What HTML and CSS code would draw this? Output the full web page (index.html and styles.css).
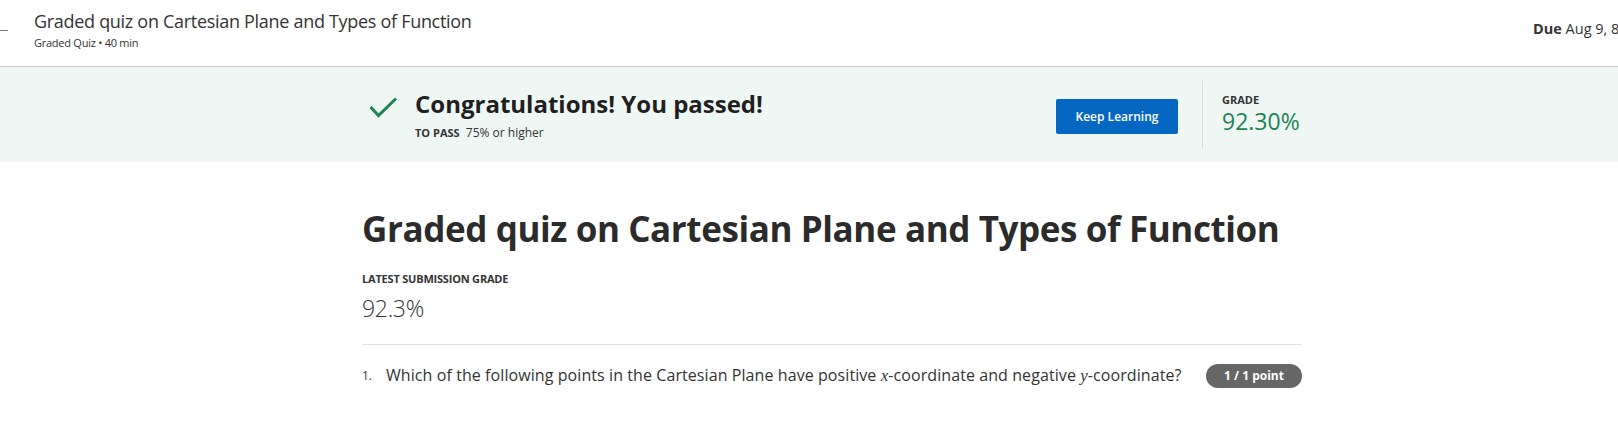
FILE: index.html
```html
<!DOCTYPE html>
<html lang="en">
<head>
<meta charset="utf-8">
<title>Graded quiz on Cartesian Plane and Types of Function</title>
<link rel="stylesheet" href="styles.css">
</head>
<body>
<header class="topbar">
  <div class="dash"></div>
  <div class="item-info">
    <div class="item-title">Graded quiz on Cartesian Plane and Types of Function</div>
    <div class="item-sub">Graded Quiz • 40 min</div>
  </div>
  <div class="due"><b>Due</b> Aug 9, 8:59 AM PDT</div>
</header>
<main class="main">
  <section class="banner">
    <div class="wrap banner-row">
      <div class="pass">
        <svg class="check" width="28" height="22" viewBox="0 0 28 22" aria-hidden="true">
          <path d="M1.5 10 L9.5 18.5 L27 1.5" fill="none" stroke="#1f8354" stroke-width="3"/>
        </svg>
        <div class="pass-text">
          <div class="congrats">Congratulations! You passed!</div>
          <div class="to-pass"><b>TO PASS</b>&nbsp; 75% or higher</div>
        </div>
      </div>
      <div class="actions">
        <button class="btn">Keep Learning</button>
        <div class="vdiv"></div>
        <div class="grade">
          <div class="grade-label">GRADE</div>
          <div class="grade-value">92.30%</div>
        </div>
      </div>
    </div>
  </section>
  <section class="wrap content">
    <h1 class="quiz-title">Graded quiz on Cartesian Plane and Types of Function</h1>
    <div class="latest-label">LATEST SUBMISSION GRADE</div>
    <div class="latest-value">92.3%</div>
    <div class="question">
      <span class="qnum">1.</span>
      <span class="qtext">Which of the following points in the Cartesian Plane have positive <i class="math">x</i>-coordinate and negative <i class="math">y</i>-coordinate?</span>
      <span class="badge">1 / 1 point</span>
    </div>
  </section>
</main>
</body>
</html>
```
FILE: styles.css
```css
* { box-sizing: border-box; }
html, body { margin: 0; padding: 0; }
body {
  font-family: "Open Sans", "Noto Sans", sans-serif;
  color: #1f1f1f;
  background: #fff;
  overflow: hidden;
}
.topbar {
  display: flex;
  height: 67px;
  border-bottom: 1px solid #c4cbc9;
  overflow: hidden;
}
.dash {
  flex: 0 0 8px;
  height: 1px;
  margin-top: 30px;
  background: #777;
}
.item-info {
  flex: 1 1 auto;
  padding-left: 26px;
  padding-top: 9px;
}
.item-title {
  font-size: 18px;
  line-height: 24px;
  letter-spacing: -0.3px;
  color: #333;
}
.item-sub {
  font-size: 11px;
  line-height: 16px;
  letter-spacing: -0.25px;
  margin-top: 2px;
  color: #333;
}
.due {
  flex: 0 0 85px;
  width: 85px;
  min-width: 0;
  white-space: nowrap;
  font-size: 14.5px;
  line-height: 18px;
  padding-top: 20px;
  color: #333;
}
.due b { font-weight: 700; }

.main { padding-left: 46px; }
.wrap { width: 940px; margin: 0 auto; }

.banner {
  background: #eff7f4;
  margin-left: -46px;
  padding-left: 46px;
  height: 95px;
}
.banner-row {
  display: flex;
  justify-content: space-between;
  align-items: center;
  height: 95px;
}
.pass { display: flex; align-items: flex-start; padding-left: 7px; }
.check { margin-top: 9px; margin-right: 18px; }
.congrats { font-size: 24px; font-weight: 700; line-height: 32px; }
.to-pass { font-size: 12px; line-height: 16px; margin-top: 5px; color: #333; }
.to-pass b { font-weight: 700; font-size: 11px; }
.actions { display: flex; align-items: center; }
.btn {
  width: 122px;
  height: 35px;
  border: 0;
  border-radius: 2px;
  background: #0567c2;
  color: #fff;
  font-family: "Open Sans", sans-serif;
  font-size: 12px;
  font-weight: 600;
  margin-top: 4px;
}
.vdiv { width: 1px; height: 68px; background: #d9dcdb; margin-left: 24px; margin-right: 19px; }
.grade { width: 80px; margin-top: -2px; }
.grade-label { font-size: 11px; font-weight: 700; line-height: 14px; color: #333; }
.grade-value { font-size: 23px; line-height: 28px; color: #1f8354; }

.content { padding-top: 43px; }
.quiz-title {
  margin: 0;
  font-size: 35px;
  line-height: 48px;
  letter-spacing: -0.4px;
  font-weight: 700;
  color: #2b2b2b;
  white-space: nowrap;
}
.latest-label { margin-top: 18px; font-size: 11px; font-weight: 700; line-height: 16px; letter-spacing: -0.2px; color: #333; }
.latest-value { margin-top: 5px; font-size: 23px; font-weight: 300; line-height: 32px; letter-spacing: -0.3px; color: #333; }
.question {
  margin-top: 20px;
  border-top: 1px solid #e0e0e0;
  padding-top: 18px;
  display: flex;
  align-items: center;
  color: #333;
}
.qnum { font-size: 12px; width: 24px; }
.qtext { font-size: 16px; line-height: 24px; letter-spacing: 0.08px; flex: 1 1 auto; }
.math { font-family: "Liberation Serif", serif; font-size: 17px; }
.badge {
  flex: 0 0 96px;
  height: 24px;
  border-radius: 12px;
  background: #666;
  color: #fff;
  font-size: 12px;
  font-weight: 700;
  line-height: 24px;
  text-align: center;
}
```
